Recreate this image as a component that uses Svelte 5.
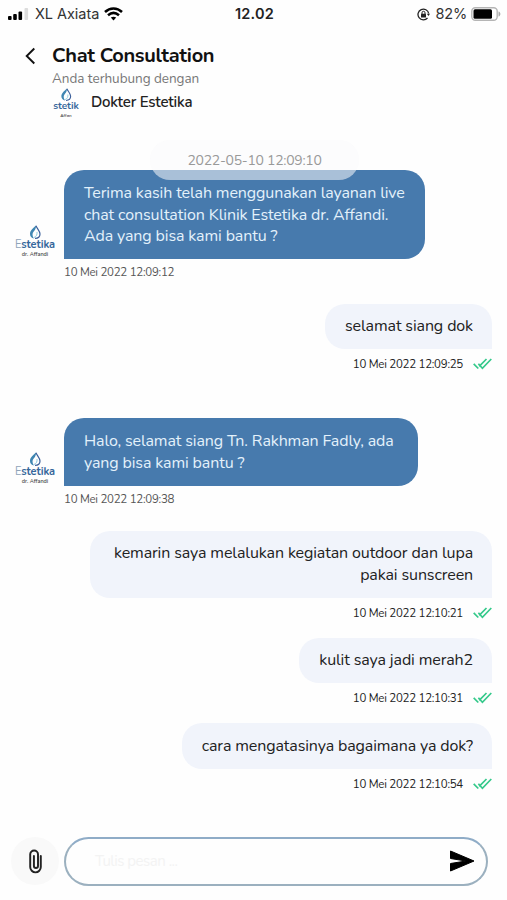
<script lang="ts">
  type Message = { from: 'clinic' | 'user'; lines: string[]; time: string };

  const messages: Message[] = [
    {
      from: 'clinic',
      lines: [
        'Terima kasih telah menggunakan layanan live',
        'chat consultation Klinik Estetika dr. Affandi.',
        'Ada yang bisa kami bantu ?'
      ],
      time: '10 Mei 2022 12:09:12'
    },
    { from: 'user', lines: ['selamat siang dok'], time: '10 Mei 2022 12:09:25' },
    {
      from: 'clinic',
      lines: ['Halo, selamat siang Tn. Rakhman Fadly, ada', 'yang bisa kami bantu ?'],
      time: '10 Mei 2022 12:09:38'
    },
    {
      from: 'user',
      lines: ['kemarin saya melalukan kegiatan outdoor dan lupa', 'pakai sunscreen'],
      time: '10 Mei 2022 12:10:21'
    },
    { from: 'user', lines: ['kulit saya jadi merah2'], time: '10 Mei 2022 12:10:31' },
    { from: 'user', lines: ['cara mengatasinya bagaimana ya dok?'], time: '10 Mei 2022 12:10:54' }
  ];
</script>

{#snippet drop()}
  <svg class="drop" viewBox="0 0 12 14" fill="none" aria-hidden="true">
    <path d="M7 .5C4 3.500 1 5.500 1 9c0 2.400 1.600 4.200 4 4.500C3.200 11 3 8.500 4.700 6.500 6.300 4.700 7.200 3 7 .5z" fill="#3f86b2" />
    <path d="M7 .8c.8 2.500 4 5 4 8.200 0 2.600-2 4.400-5 4.400" stroke="#3c5f9b" stroke-width="1.200" />
    <path d="M5 12.500c2.500-1 3.300-3 3-5.500" stroke="#8ccbe0" />
  </svg>
{/snippet}

<div class="screen">
  <div class="status">
    <div class="carrier">
      <svg width="21" height="13" viewBox="0 0 21 13" aria-hidden="true">
        <rect x="0" y="8" width="3.600" height="4" rx="1" />
        <rect x="5.200" y="6" width="3.600" height="6" rx="1" />
        <rect x="10.500" y="3.500" width="3.600" height="8.500" rx="1" />
        <rect x="16.500" y="0" width="3.600" height="12" rx="1" fill="#dcdcdc" />
      </svg>
      <span>XL Axiata</span>
      <svg class="wifi" width="19" height="14" viewBox="0 0 19 14" fill="none" stroke="#000" stroke-width="2.500" aria-hidden="true">
        <path d="M1 5c5-4.700 12-4.700 17 0" />
        <path d="M4 8.300c3.400-3 7.600-3 11 0" />
        <path d="M6.800 10.600c1.700-1.300 3.700-1.300 5.400 0L9.500 13.500z" fill="#000" stroke="none" />
      </svg>
    </div>
    <div class="clock">12.02</div>
    <div class="power">
      <svg width="13" height="13" viewBox="0 0 13 13" fill="none" stroke="#222" aria-hidden="true">
        <path d="M11.700 5.500A5.400 5.400 0 1 0 10.500 10" stroke-width="1.300" />
        <path d="M9.800 5.700h3.200l-1.500 2.300z" fill="#222" stroke="none" />
        <rect x="4" y="5.800" width="5" height="3.700" rx=".5" fill="#222" stroke="none" />
        <path d="M5 6V4.800a1.500 1.500 0 0 1 3 0V6" />
      </svg>
      <span>82%</span>
      <svg class="battery" width="30" height="14" viewBox="0 0 30 14" aria-hidden="true">
        <rect x=".8" y=".8" width="25.400" height="12.400" rx="3.500" fill="#fff" stroke="#b5b5b5" stroke-width="1.400" />
        <rect x="2.500" y="2.300" width="18.500" height="9.400" rx="1.500" />
        <path d="M27.500 4.500c2.500.5 2.500 4.500 0 5z" fill="#aaa" />
      </svg>
    </div>
  </div>

  <header>
    <svg class="back" width="11" height="18" viewBox="0 0 11 18" fill="none" stroke="#111" stroke-width="1.900" aria-hidden="true">
      <path d="M9.300 1.500L1.700 9l7.600 7.500" />
    </svg>
    <div>
      <h1>Chat Consultation</h1>
      <p>Anda terhubung dengan</p>
      <div class="doctor">
        <div class="logo small">
          {@render drop()}
          <b>stetik</b>
          <small>Affan</small>
        </div>
        <strong>Dokter Estetika</strong>
      </div>
    </div>
  </header>

  <main>
    <div class="date">2022-05-10 12:09:10</div>
    {#each messages as message}
      <div class="message {message.from}" class:wrapped={message.lines.length > 1}>
        {#if message.from === 'clinic'}
          <div class="logo">
            {@render drop()}
            <b><i>E</i>stetika</b>
            <small>dr. Affandi</small>
          </div>
        {/if}
        <div class="body">
          <div class="bubble">
            {#each message.lines as line}
              <div>{line}</div>
            {/each}
          </div>
          <div class="time">
            <span>{message.time}</span>
            {#if message.from === 'user'}
              <svg width="19" height="12" viewBox="0 0 19 12" fill="none" stroke="#35c98b" stroke-width="1.700" aria-hidden="true">
                <path d="M.7 5.800l4.600 4.700M5.400 5.800l4 4.500L18.300 1M6.200 8.300L13.500 1" />
              </svg>
            {/if}
          </div>
        </div>
      </div>
    {/each}
  </main>

  <footer>
    <div class="attach">
      <svg width="13" height="25" viewBox="0 0 14 26" fill="none" stroke="#222" stroke-width="2.100" stroke-linecap="round" aria-hidden="true">
        <path d="M12.700 7v12a5.600 5.600 0 0 1-11.400 0V5.300a4.200 4.200 0 0 1 8.400 0v12.500a2.200 2.200 0 0 1-4.400 0V7" />
      </svg>
    </div>
    <div class="field">
      <span>Tulis pesan ...</span>
      <svg width="26" height="22" viewBox="0 0 26 22" aria-hidden="true">
        <path d="M1.500 1L25 11 1.500 21V13.500L17 11 1.500 8.500z" stroke="#000" stroke-linejoin="round" />
      </svg>
    </div>
  </footer>
</div>

<style>
  :global(body) {
    margin: 0;
    background: #fefefe;
  }
  .screen {
    width: 507px;
    height: 900px;
    display: flex;
    flex-direction: column;
    overflow: hidden;
    background: #fefefe;
    color: #222;
    font-family: Nunito, Lato, sans-serif;
    white-space: nowrap;
  }
  svg {
    display: block;
    flex: none;
  }

  .status {
    display: grid;
    grid-template-columns: 1fr auto 1fr;
    align-items: center;
    height: 28px;
    padding: 0 6px 0 8px;
    box-sizing: border-box;
    font: 14.500px/28px Inter, sans-serif;
    color: #333;
  }
  .carrier,
  .power {
    display: flex;
    align-items: center;
  }
  .carrier span {
    margin: 0 5px 0 6px;
    letter-spacing: -0.05px;
  }
  .clock {
    font-weight: 600;
    letter-spacing: 0.2px;
    color: #222;
  }
  .power {
    justify-content: flex-end;
  }
  .power span {
    margin: 0 4px 0 6px;
    letter-spacing: -0.2px;
  }

  header {
    display: flex;
    gap: 16px;
    height: 112px;
    padding: 16px 0 0 25px;
    box-sizing: border-box;
  }
  .back {
    margin-top: 3px;
  }
  h1 {
    margin: 0;
    font-size: 20px;
    line-height: 24px;
    font-weight: 700;
    letter-spacing: -0.330px;
    color: #111;
  }
  p {
    margin: 0;
    font-size: 13.500px;
    line-height: 21px;
    letter-spacing: -0.03px;
    color: #777;
  }
  .doctor {
    display: flex;
    gap: 11px;
    margin-top: -1px;
  }
  .doctor strong {
    font-size: 15px;
    line-height: 28px;
    font-weight: 600;
    letter-spacing: -0.220px;
  }

  .logo {
    display: flex;
    flex-direction: column;
    align-items: center;
    width: 42px;
    color: #36679b;
  }
  .drop {
    width: 12px;
    height: 14px;
  }
  .logo b {
    font-size: 11px;
    line-height: 12px;
    font-weight: 700;
    letter-spacing: -0.1px;
  }
  .logo i {
    font-style: normal;
    font-weight: 400;
    color: #8fa3b9;
  }
  .logo small {
    font-size: 5.500px;
    line-height: 6px;
    font-weight: 600;
    color: #444;
  }
  .logo.small {
    width: 28px;
  }
  .small .drop {
    height: 13px;
  }
  .small b {
    font-size: 10px;
    line-height: 10px;
  }
  .logo.small small {
    margin-top: 2px;
    font-size: 4.500px;
    line-height: 5px;
  }

  main {
    flex: 1;
  }
  .date {
    position: relative;
    z-index: 1;
    width: 209px;
    height: 40px;
    margin: 0 0 -10px 150px;
    border-radius: 20px;
    background: rgba(249, 249, 252, 0.55);
    text-align: center;
    font-size: 14px;
    line-height: 41px;
    letter-spacing: -0.280px;
    color: #999;
  }
  .message {
    display: flex;
    padding: 0 15px 0 14px;
  }
  .message .logo {
    align-self: flex-end;
    margin: 0 8px 28px 0;
  }
  .bubble {
    padding: 13px 20px 11px;
    border-radius: 20px;
    font-size: 16px;
    line-height: 21.600px;
    letter-spacing: -0.120px;
  }
  .clinic .bubble {
    width: fit-content;
    border-bottom-left-radius: 0;
    background: #477aad;
    color: #e3f1fb;
  }
  .user {
    justify-content: flex-end;
    text-align: right;
  }
  .user .bubble {
    width: fit-content;
    margin-left: auto;
    padding: 12.500px 19px 11.500px 20px;
    border-bottom-right-radius: 0;
    background: #f1f4fb;
  }
  .user.wrapped .bubble {
    padding-left: 24px;
  }
  .time {
    display: flex;
    align-items: center;
    gap: 10px;
    height: 26px;
    font-size: 11.500px;
    letter-spacing: -0.270px;
    color: #555;
  }
  .user .time {
    justify-content: flex-end;
    height: 30px;
    color: #222;
  }
  .clinic + .user {
    margin-top: 19px;
  }
  .user + .user {
    margin-top: 10px;
  }
  .user + .clinic {
    margin-top: 39px;
  }
  .user + .clinic .bubble {
    padding-right: 24px;
  }

  footer {
    display: flex;
    align-items: center;
    gap: 5px;
    height: 78px;
    padding: 0 19px 0 11px;
  }
  .attach {
    display: grid;
    place-items: center;
    width: 48px;
    height: 48px;
    border-radius: 50%;
    background: #f9f9f9;
  }
  .field {
    display: flex;
    flex: 1;
    align-items: center;
    justify-content: space-between;
    height: 49px;
    padding: 0 11px 0 29px;
    box-sizing: border-box;
    border: 2px solid #9bb0bf;
    border-top-color: #8facc7;
    border-radius: 25px;
    font-size: 15px;
    letter-spacing: -0.5px;
    color: #f3f3f3;
  }
</style>
